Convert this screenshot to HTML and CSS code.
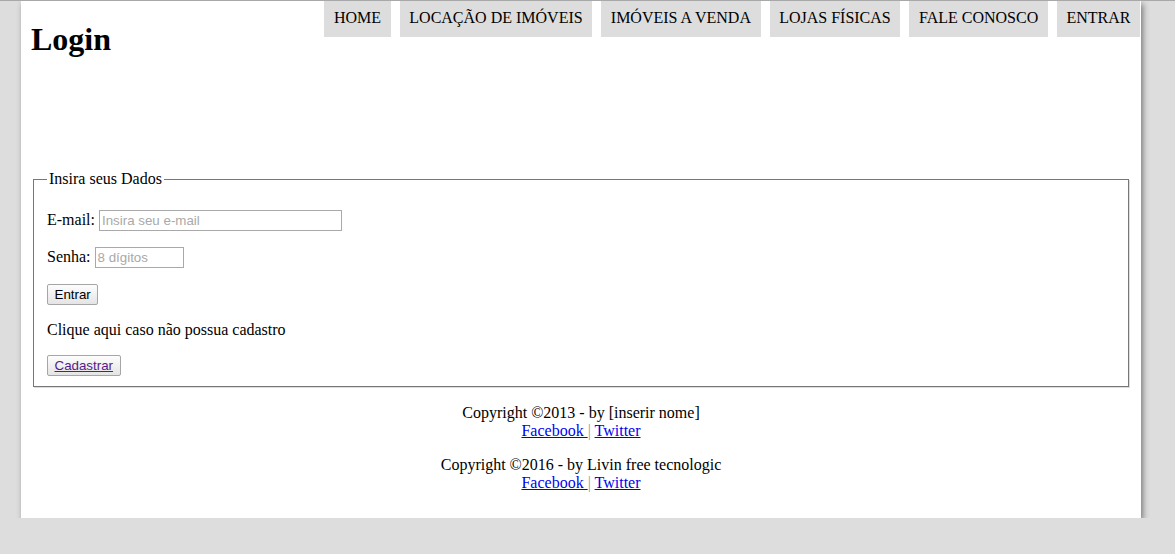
FILE: index.html
```html
<!DOCTYPE html>
<html lang="pt-BR">
<head>
<meta charset="utf-8">
<title>Login</title>
<link rel="stylesheet" href="styles.css">
</head>
<body>
<div class="page">
  <header class="header">
    <h1 class="title">Login</h1>
    <nav class="nav">
      <a class="nav-item" href="#">HOME</a>
      <a class="nav-item" href="#">LOCAÇÃO DE IMÓVEIS</a>
      <a class="nav-item" href="#">IMÓVEIS A VENDA</a>
      <a class="nav-item" href="#">LOJAS FÍSICAS</a>
      <a class="nav-item" href="#">FALE CONOSCO</a>
      <a class="nav-item" href="#">ENTRAR</a>
    </nav>
  </header>
  <main class="content">
    <fieldset class="box">
      <legend class="legend">Insira seus Dados</legend>
      <p class="row">E-mail: <input class="field field-email" type="text" placeholder="Insira seu e-mail"></p>
      <p class="row">Senha: <input class="field field-pass" type="password" placeholder="8 dígitos"></p>
      <p class="row"><button class="btn" type="button">Entrar</button></p>
      <p class="row">Clique aqui caso não possua cadastro</p>
      <p class="row row-last"><button class="btn" type="button"><a class="visited" href="#">Cadastrar</a></button></p>
    </fieldset>
    <footer class="footer">
      <p class="foot">Copyright ©2013 - by [inserir nome]<br><a class="link" href="#">Facebook </a><span class="sep">|</span> <a class="link" href="#">Twitter</a></p>
      <p class="foot">Copyright ©2016 - by Livin free tecnologic<br><a class="link" href="#">Facebook </a><span class="sep">|</span> <a class="link" href="#">Twitter</a></p>
    </footer>
  </main>
</div>
</body>
</html>
```
FILE: styles.css
```css
html, body {
  margin: 0;
  padding: 0;
}
body {
  background: #dddddd;
  border-top: 1px solid #a8a8a8;
  font-family: "Liberation Serif", "Times New Roman", serif;
  font-size: 16px;
  color: #000;
}
.page {
  width: 1120px;
  margin-left: 21px;
  background: #fff;
  box-shadow: 2px 3px 6px rgba(0, 0, 0, 0.45);
}
.header {
  display: flex;
  justify-content: space-between;
  align-items: flex-start;
  height: 169px;
}
.title {
  font-size: 32px;
  font-weight: bold;
  margin: 20px 0 0 10px;
}
.nav {
  display: flex;
  gap: 9px;
  margin-right: 1px;
}
.nav-item {
  display: block;
  background: #dddddd;
  color: #000;
  text-decoration: none;
  padding: 8px 9.6px 10px;
  line-height: 18px;
}
.content {
  padding: 0 10px 10px;
}
.box {
  margin: 0 2px;
  border: 1px solid #777;
  box-shadow: inset 1px 1px 0 #fff, 1px 1px 0 #ddd;
  padding: 6px 12px 10px 13px;
}
.legend {
  padding: 0 2px;
  line-height: 18px;
}
.row {
  margin: 16px 0;
}
.row-last {
  margin-bottom: 0;
}
.field {
  box-sizing: border-box;
  height: 21px;
  border: 1px solid #a9a9a9;
  padding: 1px 2px;
  font-family: "Liberation Sans", Arial, sans-serif;
  font-size: 13.33px;
  vertical-align: baseline;
}
.field::placeholder {
  color: #a9a9a9;
}
.field-email {
  width: 243px;
}
.field-pass {
  width: 89px;
}
.btn {
  box-sizing: border-box;
  height: 21px;
  padding: 1px 6.5px;
  border: 1px solid #a6a6a6;
  border-radius: 2px;
  background: linear-gradient(#fdfdfd, #e4e4e4);
  font-family: "Liberation Sans", Arial, sans-serif;
  font-size: 13.33px;
  color: #000;
}
.visited {
  color: #551a8b;
}
.footer {
  text-align: center;
  padding-top: 1px;
}
.foot {
  margin: 16px 0;
  line-height: 18px;
}
.link {
  color: #0000ee;
}
.sep {
  color: #999;
}
```
